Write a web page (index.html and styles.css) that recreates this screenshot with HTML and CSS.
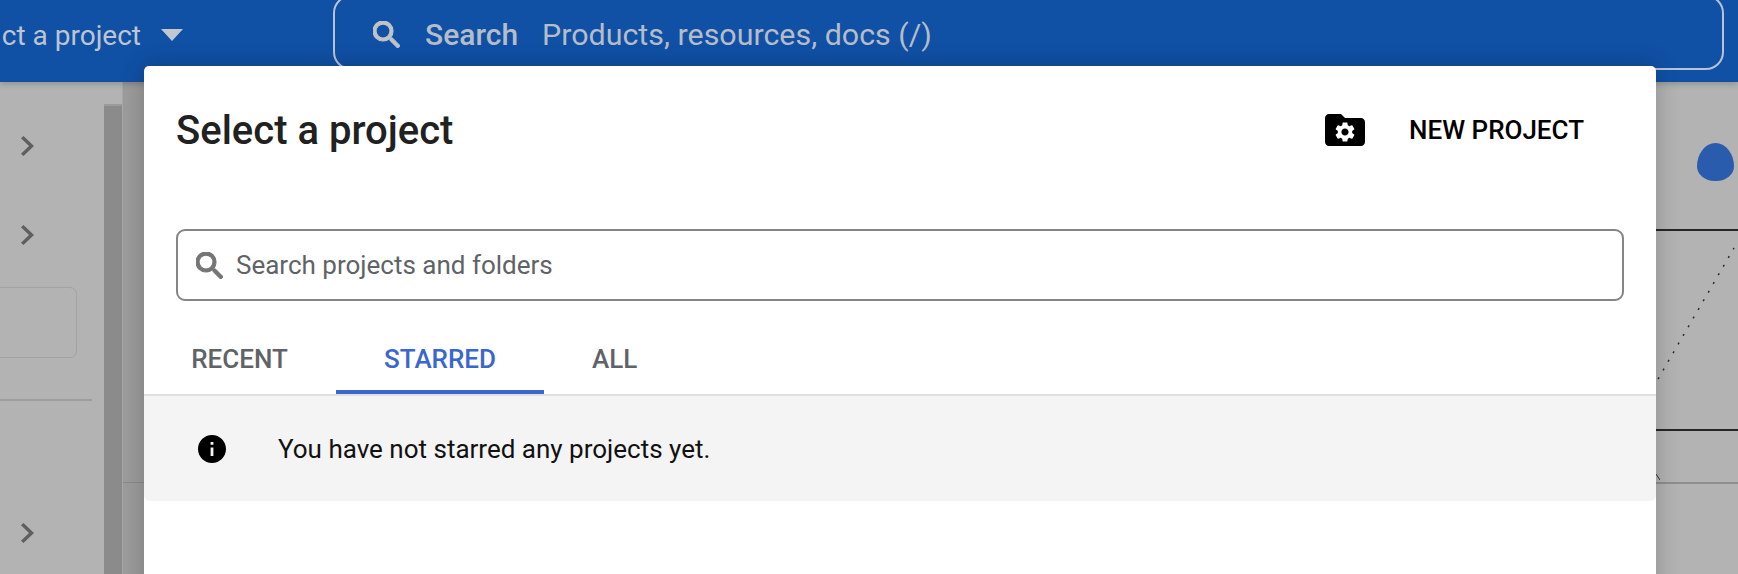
FILE: index.html
```html
<!DOCTYPE html>
<html lang="en">
<head>
  <meta charset="UTF-8" />
  <title>Select a project</title>
  <link rel="stylesheet" href="styles.css">
</head>
<body>
  <header class="topbar">
    <div class="picker">
      <span class="picker-label">ct a project</span>
      <span class="picker-arrow"></span>
    </div>
    <div class="global-search">
      <svg class="icon-search" viewBox="3 3 17.5 17.5"><path d="M15.5 14h-.79l-.28-.27A6.471 6.471 0 0 0 16 9.5 6.5 6.5 0 1 0 9.5 16c1.61 0 3.09-.59 4.23-1.57l.27.28v.79l5 4.99L20.49 19l-4.99-5zm-6 0C7.01 14 5 11.99 5 9.5S7.01 5 9.5 5 14 7.01 14 9.5 11.99 14 9.5 14z"/></svg>
      <span class="global-search-label">Search</span>
      <span class="global-search-hint">Products, resources, docs (/)</span>
    </div>
  </header>

  <div class="backdrop">
    <aside class="sidebar">
      <svg class="chevron" viewBox="8.59 6 7.41 12" preserveAspectRatio="none"><path d="M10 6L8.59 7.41 13.17 12l-4.58 4.59L10 18l6-6z"/></svg>
      <svg class="chevron chevron-second" viewBox="8.59 6 7.41 12" preserveAspectRatio="none"><path d="M10 6L8.59 7.41 13.17 12l-4.58 4.59L10 18l6-6z"/></svg>
      <div class="side-box"></div>
      <div class="side-rule"></div>
      <svg class="chevron chevron-last" viewBox="8.59 6 7.41 12" preserveAspectRatio="none"><path d="M10 6L8.59 7.41 13.17 12l-4.58 4.59L10 18l6-6z"/></svg>
    </aside>
    <div class="rail"></div>
    <div class="gutter"></div>
    <div class="right-panel">
      <div class="blob"></div>
      <div class="chart">
        <svg class="chart-line" viewBox="0 0 82 198"><path d="M2 148L78 17"/></svg>
      </div>
      <div class="chart-foot">
        <svg class="chart-tick" viewBox="0 0 4 6"><path d="M0 0L4 6"/></svg>
      </div>
    </div>
  </div>

  <div class="modal">
    <div class="modal-head">
      <h1>Select a project</h1>
      <div class="new-project">
        <svg class="icon-folder" viewBox="2 4 20 16">
          <path d="M20 6h-8l-2-2H4c-1.1 0-2 .9-2 2v12c0 1.1.9 2 2 2h16c1.1 0 2-.9 2-2V8c0-1.1-.9-2-2-2z"/>
          <path transform="translate(6 7) scale(.5)" fill="#fff" d="M19.14 12.94c.04-.3.06-.61.06-.94 0-.32-.02-.64-.07-.94l2.03-1.58c.18-.14.23-.41.12-.61l-1.92-3.32c-.12-.22-.37-.29-.59-.22l-2.39.96c-.5-.38-1.03-.7-1.62-.94l-.36-2.54c-.04-.24-.24-.41-.48-.41h-3.84c-.24 0-.43.17-.47.41l-.36 2.54c-.59.24-1.13.57-1.62.94l-2.39-.96c-.22-.08-.47 0-.59.22L2.74 8.87c-.12.21-.08.47.12.61l2.03 1.58c-.05.3-.09.63-.09.94s.02.64.07.94l-2.03 1.58c-.18.14-.23.41-.12.61l1.92 3.32c.12.22.37.29.59.22l2.39-.96c.5.38 1.03.7 1.62.94l.36 2.54c.05.24.24.41.48.41h3.84c.24 0 .44-.17.47-.41l.36-2.54c.59-.24 1.13-.56 1.62-.94l2.39.96c.22.08.47 0 .59-.22l1.92-3.32c.12-.22.07-.47-.12-.61l-2.01-1.58zM12 15.6c-1.98 0-3.6-1.62-3.6-3.6s1.62-3.6 3.6-3.6 3.6 1.62 3.6 3.6-1.62 3.6-3.6 3.6z"/>
        </svg>
        <span class="new-project-label">NEW PROJECT</span>
      </div>
    </div>

    <div class="project-search">
      <svg class="icon-search icon-search-grey" viewBox="3 3 17.5 17.5"><path d="M15.5 14h-.79l-.28-.27A6.471 6.471 0 0 0 16 9.5 6.5 6.5 0 1 0 9.5 16c1.61 0 3.09-.59 4.23-1.57l.27.28v.79l5 4.99L20.49 19l-4.99-5zm-6 0C7.01 14 5 11.99 5 9.5S7.01 5 9.5 5 14 7.01 14 9.5 11.99 14 9.5 14z"/></svg>
      <span>Search projects and folders</span>
    </div>

    <div class="tabs">
      <div class="tab tab-recent">RECENT</div>
      <div class="tab tab-starred">STARRED</div>
      <div class="tab tab-all">ALL</div>
    </div>

    <div class="notice">
      <svg class="icon-info" viewBox="2 2 20 20"><path d="M12 2C6.48 2 2 6.48 2 12s4.48 10 10 10 10-4.48 10-10S17.52 2 12 2zm1 15h-2v-6h2v6zm0-8h-2V7h2v2z"/></svg>
      <span>You have not starred any projects yet.</span>
    </div>
  </div>
</body>
</html>
```

FILE: styles.css
```css
html, body {
  margin: 0;
  height: 574px;
  overflow: hidden;
}
body {
  font-family: Roboto, "Liberation Sans", sans-serif;
  background: #b3b3b3;
  position: relative;
}

/* header */
.topbar {
  height: 82px;
  background: #1050a5;
  display: flex;
  box-shadow: 0 2px 6px rgba(0,0,0,.2);
  position: relative;
}
.picker {
  width: 183px;
  height: 70px;
  display: flex;
  align-items: center;
  justify-content: flex-end;
  white-space: nowrap;
  flex-shrink: 0;
}
.picker-label {
  font-size: 28px;
  color: #bcc5d2;
}
.picker-arrow {
  margin-left: 20px;
  border-left: 11.5px solid transparent;
  border-right: 11.5px solid transparent;
  border-top: 12px solid #c2c7d0;
}
.global-search {
  width: 1391px;
  height: 75px;
  margin: -5px 0 0 150px;
  border: 2px solid #b8c3d5;
  border-radius: 18px;
  display: flex;
  align-items: center;
  padding-left: 38px;
  padding-top: 4px;
  box-sizing: border-box;
  font-size: 30.4px;
  color: #b5bdc9;
}
.icon-search {
  width: 27px;
  height: 27px;
  fill: #c0c3c8;
  stroke: #c0c3c8;
  stroke-width: .7;
  flex-shrink: 0;
}
.global-search-label {
  font-size: 30px;
  font-weight: 500;
  margin-left: 25px;
}
.global-search-hint {
  margin-left: 24px;
}

/* page behind the dialog */
.backdrop {
  display: flex;
  height: 492px;
}
.sidebar {
  width: 104px;
  padding-top: 54px;
  box-sizing: border-box;
}
.chevron {
  display: block;
  width: 13px;
  height: 20px;
  margin-left: 21px;
  fill: #5f5f5f;
}
.chevron-second {
  margin-top: 69px;
}
.side-box {
  width: 100px;
  height: 71px;
  margin: 42px 0 0 -23px;
  border: 1px solid #a3a3a3;
  border-radius: 7px;
  box-sizing: border-box;
}
.side-rule {
  width: 92px;
  margin-top: 41px;
  border-top: 2px solid #9d9d9d;
}
.chevron-last {
  margin-top: 122px;
}
.rail {
  width: 18px;
  margin-top: 22px;
  background: #8b8b8b;
  border-top: 2px solid #9b9b9b;
  box-sizing: border-box;
}
.gutter {
  width: 22px;
  background: #9c9c9c;
  border-left: 1px solid #a8a8a8;
  box-sizing: border-box;
  background-image: linear-gradient(#8a8a8a, #8a8a8a);
  background-repeat: no-repeat;
  background-size: 100% 1px;
  background-position: 0 400px;
}
.right-panel {
  margin-left: auto;
  width: 82px;
  padding-top: 61px;
  box-sizing: border-box;
}
.blob {
  width: 37px;
  height: 38px;
  margin-left: 41px;
  background: #2a5cae;
  border-radius: 50% 50% 48% 48% / 62% 62% 38% 38%;
}
.chart {
  height: 202px;
  margin-top: 48px;
  border-top: 2px solid #262626;
  border-bottom: 2px solid #262626;
  box-sizing: border-box;
}
.chart-line {
  display: block;
  width: 82px;
  height: 198px;
  fill: none;
  stroke: #2b2b2b;
  stroke-width: 1.5;
  stroke-dasharray: 2 8;
}
.chart-foot {
  height: 53px;
  border-bottom: 2px solid #8e8e8e;
  box-sizing: border-box;
  padding-top: 43px;
}
.chart-tick {
  display: block;
  width: 4px;
  height: 6px;
  fill: none;
  stroke: #333;
  stroke-width: 1;
}

/* dialog */
.modal {
  position: absolute;
  left: 144px;
  top: 66px;
  width: 1512px;
  height: 560px;
  background: #fff;
  border-radius: 5px;
  box-shadow: 0 0 24px rgba(0,0,0,.22);
}
.modal-head {
  display: flex;
  align-items: center;
  justify-content: space-between;
  padding: 40px 72px 0 32px;
  height: 48px;
}
h1 {
  margin: 0;
  font-size: 40px;
  font-weight: 500;
  color: #212121;
}
.new-project {
  display: flex;
  align-items: center;
}
.icon-folder {
  width: 40px;
  height: 32px;
}
.new-project-label {
  margin-left: 44px;
  font-size: 26px;
  font-weight: 500;
  color: #000;
}
.project-search {
  margin: 75px 32px 0;
  height: 72px;
  border: 2px solid #858585;
  border-radius: 9px;
  box-sizing: border-box;
  display: flex;
  align-items: center;
  padding-left: 18px;
  font-size: 26px;
  color: #5f6368;
}
.icon-search-grey {
  fill: #757575;
  stroke: #757575;
  margin-right: 13px;
}
.project-search span {
  white-space: nowrap;
}
.tabs {
  display: flex;
  margin-top: 22px;
  height: 73px;
  border-bottom: 2px solid #e0e0e0;
  padding-left: 32px;
  box-sizing: border-box;
}
.tab {
  font-size: 26px;
  font-weight: 500;
  color: #5f6368;
  line-height: 72px;
  box-sizing: border-box;
  height: 71px;
  text-align: center;
}
.tab-recent {
  width: 127px;
}
.tab-starred {
  margin-left: 33px;
  width: 208px;
  color: #3a66cf;
  border-bottom: 4px solid #3a66cf;
}
.tab-all {
  margin-left: 48px;
}
.notice {
  height: 105px;
  background: #f4f4f4;
  border-radius: 0 0 6px 6px;
  display: flex;
  align-items: center;
  padding-left: 54px;
  font-size: 26px;
  color: #111;
}
.icon-info {
  width: 28px;
  height: 28px;
  margin-right: 52px;
}
```
